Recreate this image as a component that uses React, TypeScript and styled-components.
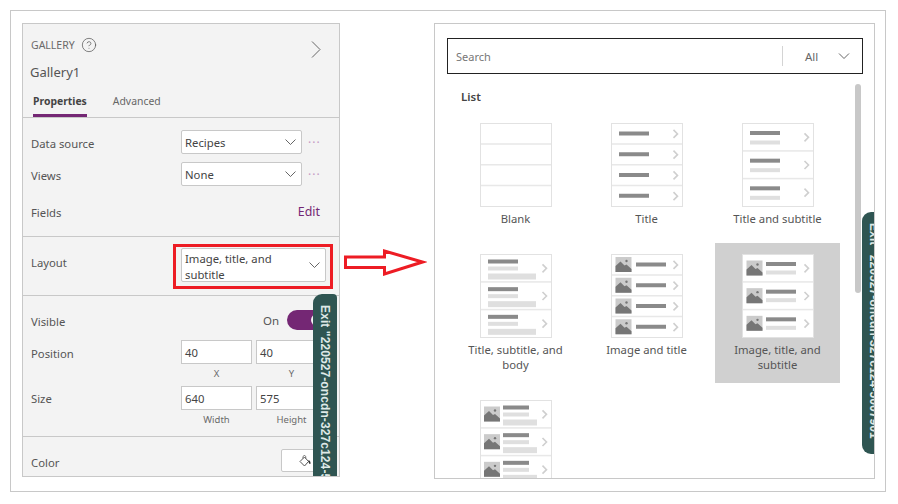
import { FC, ReactNode } from "react";
import styled, { createGlobalStyle } from "styled-components";
import { CircleHelp } from "lucide-react";

const PURPLE = "#742774";
const EXIT_TEXT = 'Exit "220527-oncdn-327c124-5007901';

const GlobalStyle = createGlobalStyle`
  html, body {
    margin: 0;
    padding: 0;
    background: #fff;
    font-family: "Noto Sans", "Open Sans", sans-serif;
    font-size: 11.3px;
    color: #555;
  }
`;

const Frame = styled.div`
  display: flex;
  box-sizing: border-box;
  margin: 10px 0 0 10px;
  padding: 12px 11px;
  width: 876px;
  height: 482px;
  border: 1px solid #c8c8c8;
`;

const LeftPanel = styled.section`
  position: relative;
  box-sizing: border-box;
  flex: none;
  width: 318px;
  height: 454px;
  background: #f3f3f3;
  border: 1px solid #c8c8c8;
  overflow: hidden;
`;

const Header = styled.header`
  position: relative;
  height: 93px;
  border-bottom: 1px solid #c8c8c8;
  box-sizing: content-box;
`;

const TitleRow = styled.div`
  display: flex;
  align-items: center;
  gap: 6px;
  padding: 13px 8px 0;
  height: 16px;
  font-size: 10.5px;
  color: #6a6a6a;
`;

const CloseChevron = styled.svg`
  position: absolute;
  top: 17px;
  right: 18px;
`;

const ControlName = styled.div`
  margin: 10px 0 0 7px;
  font-size: 13px;
  line-height: 18px;
  color: #555;
`;

const Tabs = styled.div`
  display: flex;
  gap: 26px;
  margin: 12px 0 0 10px;
`;

const Tab = styled.div<{ $active?: boolean }>`
  height: 21px;
  line-height: 17px;
  font-size: 10.4px;
  font-weight: ${(p) => (p.$active ? 700 : 400)};
  color: ${(p) => (p.$active ? "#444" : "#666")};
  border-bottom: 3px solid ${(p) => (p.$active ? PURPLE : "transparent")};
`;

const Section = styled.div<{ $height: number }>`
  display: flex;
  flex-direction: column;
  box-sizing: border-box;
  padding-top: 12px;
  height: ${(p) => p.$height}px;
  border-bottom: 1px solid #c8c8c8;
`;

const Row = styled.div<{ $height?: number; $top?: number; $alignTop?: boolean }>`
  display: flex;
  align-items: ${(p) => (p.$alignTop ? "flex-start" : "center")};
  flex: none;
  margin-top: ${(p) => p.$top ?? 0}px;
  padding: 0 8px;
  height: ${(p) => p.$height ?? 24}px;
`;

const Label = styled.div<{ $offset: number }>`
  flex: none;
  width: 150px;
  margin-top: ${(p) => p.$offset}px;
`;

const Controls = styled.div<{ $end?: boolean }>`
  display: flex;
  flex: 1;
  align-items: center;
  justify-content: ${(p) => (p.$end ? "flex-end" : "flex-start")};
  min-width: 0;
`;

const Select = styled.div<{ $width: number; $height?: number }>`
  position: relative;
  display: flex;
  align-items: center;
  justify-content: space-between;
  flex: none;
  box-sizing: border-box;
  padding: 0 5px 0 3px;
  width: ${(p) => p.$width}px;
  height: ${(p) => p.$height ?? 24}px;
  background: #fff;
  border: 1px solid #c8c8c8;
  border-radius: 2px;
  color: #444;
`;

const SelectText = styled.span<{ $wrapped?: boolean }>`
  padding-top: ${(p) => (p.$wrapped ? 4 : 2)}px;
  line-height: 16px;
`;

const Highlight = styled.div`
  position: absolute;
  inset: -5px -8px -8px -9px;
  border: 3px solid #ed1c24;
`;

const Dots = styled.span`
  margin: 2px 0 0 6px;
  width: 12px;
  color: #c59ac5;
  font-size: 12px;
  line-height: 12px;
  letter-spacing: 1px;
`;

const EditLink = styled.span`
  margin-right: 11px;
  font-size: 12.4px;
  color: ${PURPLE};
`;

const StateText = styled.span`
  margin-right: 8px;
  font-size: 11.5px;
`;

const Toggle = styled.div`
  position: relative;
  flex: none;
  width: 44px;
  height: 20px;
  background: ${PURPLE};
  border-radius: 10px;
`;

const ToggleKnob = styled.div`
  position: absolute;
  top: 4px;
  left: 24px;
  width: 12px;
  height: 12px;
  background: #f3f3f3;
  border-radius: 50%;
`;

const FieldPair = styled.div`
  display: flex;
  gap: 4px;
`;

const Field = styled.div`
  display: flex;
  flex-direction: column;
  align-items: center;
  flex: none;
  width: 71px;
`;

const FieldInput = styled.div`
  box-sizing: border-box;
  padding: 1px 0 0 3px;
  width: 100%;
  height: 24px;
  line-height: 21px;
  background: #fff;
  border: 1px solid #c8c8c8;
  color: #444;
`;

const FieldCaption = styled.div`
  margin-top: 3px;
  font-size: 9.5px;
  line-height: 14px;
  color: #6a6a6a;
`;

const Swatch = styled.div`
  display: flex;
  align-items: center;
  box-sizing: border-box;
  padding-left: 17px;
  width: 50px;
  height: 23px;
  background: #fff;
  border: 1px solid #c8c8c8;
  border-radius: 2px;
`;

const ExitTab = styled.div<{ $top: number; $height: number; $right: number }>`
  position: absolute;
  top: ${(p) => p.$top}px;
  right: ${(p) => p.$right}px;
  box-sizing: border-box;
  padding: 11px 0 0 0;
  width: 24px;
  height: ${(p) => p.$height}px;
  background: #2f5552;
  border-radius: 9px 4px 4px 9px;
  color: #dfe9e7;
  font-family: "Liberation Sans", sans-serif;
  font-size: 12px;
  font-weight: 700;
  letter-spacing: 0.1px;
  line-height: 24px;
  writing-mode: vertical-rl;
  white-space: nowrap;
  overflow: hidden;
`;

const ArrowSvg = styled.svg`
  flex: none;
  margin: 226px 7px 0 4px;
`;

const RightPanel = styled.section`
  position: relative;
  box-sizing: border-box;
  flex: none;
  width: 441px;
  height: 456px;
  background: #fff;
  border: 1px solid #c8c8c8;
  overflow: hidden;
`;

const SearchBar = styled.div`
  display: flex;
  align-items: center;
  box-sizing: border-box;
  margin: 14px 0 0 12px;
  padding: 0 12px 0 8px;
  width: 416px;
  height: 36px;
  border: 1px solid #222;
`;

const SearchText = styled.span`
  flex: 1;
  font-size: 11px;
  color: #777;
`;

const SearchDivider = styled.div`
  width: 1px;
  height: 20px;
  background: #d4d4d4;
`;

const FilterText = styled.span`
  margin: 0 18px 0 22px;
  width: 15px;
  font-size: 11.5px;
  color: #666;
`;

const Scrollbar = styled.div`
  position: absolute;
  top: 60px;
  left: 420px;
  width: 6px;
  height: 209px;
  background: #c8c8c8;
  border-radius: 3px;
`;

const ListHeading = styled.h3`
  margin: 14px 0 0 26px;
  font-size: 11.5px;
  font-weight: 600;
  line-height: 18px;
  color: #444;
`;

const Grid = styled.div`
  display: grid;
  grid-template-columns: repeat(3, 125px);
  gap: 6px;
  margin: 6px 0 0 18px;
`;

const Card = styled.div<{ $selected?: boolean }>`
  display: flex;
  flex-direction: column;
  align-items: center;
  padding: 11px 8px 11px;
  box-sizing: border-box;
  background: ${(p) => (p.$selected ? "#d0d0d0" : "transparent")};
`;

const CardLabel = styled.div`
  margin-top: 4px;
  width: 100%;
  line-height: 15px;
  text-align: center;
  color: #555;
`;

type Bar = { x: number; y: number; w: number; h: number; light?: boolean };
type Variant = {
  rows: number;
  bars: Bar[];
  image?: { x: number; y: number };
};

const title = (x: number, y: number, w = 30): Bar => ({ x, y, w, h: 4 });
const sub = (x: number, y: number, w = 30, h = 4): Bar => ({ x, y, w, h, light: true });

const variants: Record<string, Variant> = {
  blank: { rows: 4, bars: [] },
  title: { rows: 4, bars: [title(8, 8)] },
  titleSub: { rows: 3, bars: [title(8, 7.5), sub(8, 17)] },
  titleSubBody: { rows: 3, bars: [title(8, 5), sub(8, 12), sub(8, 19, 48, 6)] },
  imageTitle: { rows: 4, image: { x: 4.5, y: 2.5 }, bars: [title(25, 8)] },
  imageTitleSub: { rows: 3, image: { x: 4.5, y: 6 }, bars: [title(24, 7.5), sub(24, 16)] },
  imageTitleSubBody: {
    rows: 3,
    image: { x: 4, y: 6 },
    bars: [title(23, 5, 26), sub(23, 12, 26), sub(23, 19, 34, 6)],
  },
};

const Thumbnail: FC<{ kind: string }> = ({ kind }) => {
  const v = variants[kind];
  const pitch = 83 / v.rows;
  const rows = Array.from({ length: v.rows }, (_, i) => i);
  return (
    <svg width="72" height="84" viewBox="0 0 72 84" style={{ flex: "none" }}>
      <rect x="0.5" y="0.5" width="71" height="83" fill="#fff" stroke="#e2e2e2" />
      {rows.slice(1).map((i) => (
        <rect key={i} x="1" y={i * pitch - 0.5} width="70" height="1.5" fill="#e8e8e8" />
      ))}
      {rows.map((i) => {
        const top = i * pitch + 0.5;
        const mid = top + pitch / 2;
        return (
          <g key={i}>
            {v.image && (
              <g transform={`translate(${v.image.x} ${top + v.image.y})`}>
                <rect width="16" height="15" fill="#cbcbcb" />
                <path d="M0 15V9l5-4.500 4 4 2-1 5 4.500V15z" fill="#767676" />
                <circle cx="11" cy="4" r="1.200" fill="#767676" />
              </g>
            )}
            {v.bars.map((b, j) => (
              <rect key={j} x={b.x} y={top + b.y} width={b.w} height={b.h} fill={b.light ? "#dfdfdf" : "#8a8a8a"} />
            ))}
            {kind !== "blank" && (
              <path d={`M62.500 ${mid - 4}l4 4-4 4`} fill="none" stroke="#cfcfcf" strokeWidth="1.600" />
            )}
          </g>
        );
      })}
    </svg>
  );
};

const Chevron: FC<{ width?: number }> = ({ width = 11 }) => (
  <svg width={width} height="6" viewBox="0 0 11 6" style={{ flex: "none" }}>
    <path d="M0.500 0.500l5 5 5-5" fill="none" stroke="#555" strokeWidth="0.900" />
  </svg>
);

const BucketIcon: FC = () => (
  <svg width="12" height="12" viewBox="0 0 12 12" style={{ flex: "none" }}>
    <path d="M1 6.500L5.500 2l4 4.500L5.500 11z" fill="#fff" stroke="#555" strokeWidth="1" />
    <path d="M4 3.500C3.500 1.500 4.500 0.500 5.500 0.500s1.500 1 1.200 3" fill="none" stroke="#555" strokeWidth="0.800" />
    <path d="M9 5.500h1.500c0.800 1 1.200 2 1 3-0.200 0.800-1 0.800-1.200 0L9.500 7z" fill="#333" />
  </svg>
);

const Caption: FC<{ value: string; caption: string }> = ({ value, caption }) => (
  <Field>
    <FieldInput>{value}</FieldInput>
    <FieldCaption>{caption}</FieldCaption>
  </Field>
);

const PropertyRow: FC<{
  label: string;
  height?: number;
  top?: number;
  end?: boolean;
  alignTop?: boolean;
  labelOffset?: number;
  children?: ReactNode;
}> = ({ label, height, top, end, alignTop, labelOffset = 3, children }) => (
  <Row $height={height} $top={top} $alignTop={alignTop}>
    <Label $offset={labelOffset}>{label}</Label>
    <Controls $end={end}>{children}</Controls>
  </Row>
);

const cards = [
  { kind: "blank", label: "Blank" },
  { kind: "title", label: "Title" },
  { kind: "titleSub", label: "Title and subtitle" },
  { kind: "titleSubBody", label: "Title, subtitle, and body" },
  { kind: "imageTitle", label: "Image and title" },
  { kind: "imageTitleSub", label: "Image, title, and subtitle", selected: true },
  { kind: "imageTitleSubBody", label: "" },
];

const App: FC = () => {
  return (
    <>
      <GlobalStyle />
      <Frame>
        <LeftPanel>
          <Header>
            <TitleRow>
              GALLERY
              <CircleHelp size={16} strokeWidth={1.100} color="#555" />
            </TitleRow>
            <CloseChevron width="10" height="17" viewBox="0 0 10 17">
              <path d="M1 0.500l8 8-8 8" fill="none" stroke="#666" strokeWidth="1" />
            </CloseChevron>
            <ControlName>Gallery1</ControlName>
            <Tabs>
              <Tab $active>Properties</Tab>
              <Tab>Advanced</Tab>
            </Tabs>
          </Header>

          <Section $height={119}>
            <PropertyRow label="Data source">
              <Select $width={121}>
                <SelectText>Recipes</SelectText>
                <Chevron />
              </Select>
              <Dots>···</Dots>
            </PropertyRow>
            <PropertyRow label="Views" top={8}>
              <Select $width={121}>
                <SelectText>None</SelectText>
                <Chevron />
              </Select>
              <Dots>···</Dots>
            </PropertyRow>
            <PropertyRow label="Fields" top={13} end>
              <EditLink>Edit</EditLink>
            </PropertyRow>
          </Section>

          <Section $height={59}>
            <PropertyRow label="Layout" height={34} top={-1} labelOffset={-5}>
              <Select $width={145} $height={34}>
                <SelectText $wrapped>
                  Image, title, and
                  <br />
                  subtitle
                </SelectText>
                <Chevron />
                <Highlight />
              </Select>
            </PropertyRow>
          </Section>

          <Section $height={141}>
            <PropertyRow label="Visible" height={20} top={2} end>
              <StateText>On</StateText>
              <Toggle>
                <ToggleKnob />
              </Toggle>
            </PropertyRow>
            <PropertyRow label="Position" height={41} top={10} alignTop labelOffset={6}>
              <FieldPair>
                <Caption value="40" caption="X" />
                <Caption value="40" caption="Y" />
              </FieldPair>
            </PropertyRow>
            <PropertyRow label="Size" height={41} top={5} alignTop labelOffset={5}>
              <FieldPair>
                <Caption value="640" caption="Width" />
                <Caption value="575" caption="Height" />
              </FieldPair>
            </PropertyRow>
          </Section>

          <PropertyRow label="Color" height={23} top={12} end>
            <Swatch>
              <BucketIcon />
            </Swatch>
          </PropertyRow>

          <ExitTab $top={270} $height={220} $right={2}>
            {EXIT_TEXT}
          </ExitTab>
        </LeftPanel>

        <ArrowSvg width="83" height="27" viewBox="0 0 83 27">
          <path
            d="M1.500 8H40.500V2L78.500 13 40.500 25V18.500H1.500z"
            fill="#fff"
            stroke="#ed1c24"
            strokeWidth="3"
          />
        </ArrowSvg>

        <RightPanel>
          <SearchBar>
            <SearchText>Search</SearchText>
            <SearchDivider />
            <FilterText>All</FilterText>
            <Chevron width={12} />
          </SearchBar>
          <ListHeading>List</ListHeading>
          <Grid>
            {cards.map((c) => (
              <Card key={c.kind} $selected={c.selected}>
                <Thumbnail kind={c.kind} />
                {c.label && <CardLabel>{c.label}</CardLabel>}
              </Card>
            ))}
          </Grid>
          <Scrollbar />
          <ExitTab $top={188} $height={242} $right={-12}>
            {EXIT_TEXT}
          </ExitTab>
        </RightPanel>
      </Frame>
    </>
  );
};

export default App;
